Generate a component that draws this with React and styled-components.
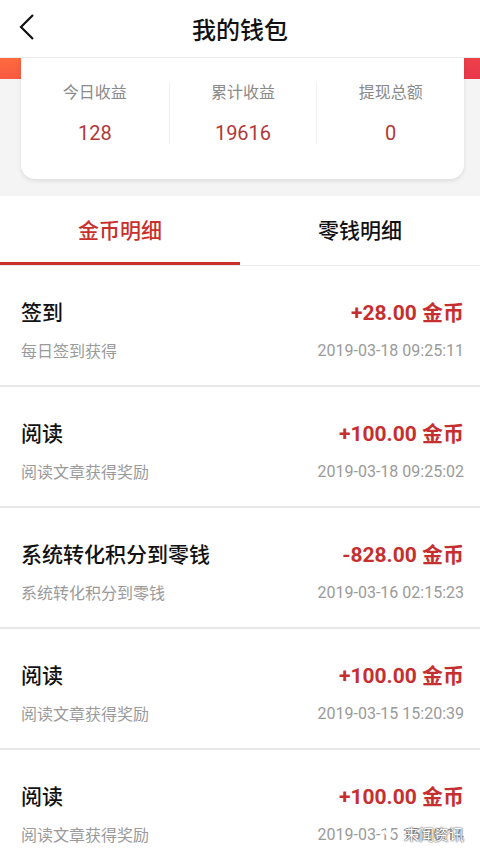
import React from 'react';
import styled, { createGlobalStyle } from 'styled-components';

const GlobalStyle = createGlobalStyle`
  html, body {
    margin: 0;
    padding: 0;
    background: #ffffff;
    font-family: Roboto, "Noto Sans CJK SC", sans-serif;
  }
`;

const Page = styled.div`
  width: 480px;
  height: 854px;
  overflow: hidden;
  position: relative;
  background: #ffffff;
`;

const Header = styled.div`
  height: 58px;
  display: flex;
  align-items: center;
  justify-content: center;
  position: relative;
  background: #fff;
  border-bottom: 1px solid #ececec;
  box-sizing: border-box;
`;

const BackButton = styled.div`
  position: absolute;
  left: 16px;
  top: 13px;
  width: 24px;
  height: 28px;
`;

const Title = styled.h1`
  margin: 0;
  font-size: 24px;
  font-weight: 500;
  color: #111;
`;

const Summary = styled.div`
  padding: 0 16px 17px 21px;
  background:
    linear-gradient(172deg, #ff6b3d 0%, #f04a45 50%, #e8364d 100%) top / 100% 21px no-repeat,
    #f4f4f4;
`;

const Card = styled.div`
  height: 121px;
  background: #fff;
  border-radius: 0 0 14px 14px;
  box-shadow: 0 2px 4px rgba(0, 0, 0, 0.1);
  display: grid;
  grid-template-columns: repeat(3, 1fr);
  padding-top: 24px;
  box-sizing: border-box;
`;

const Stat = styled.div`
  display: flex;
  flex-direction: column;
  align-items: center;
  height: 62px;
  border-left: ${(p) => (p.$first ? 'none' : '1px solid #f0f0f0')};
`;

const StatLabel = styled.span`
  font-size: 16px;
  color: #8a8a8a;
  line-height: 22px;
`;

const StatValue = styled.span`
  margin-top: 17px;
  font-size: 20px;
  color: #b23838;
  line-height: 24px;
`;

const Tabs = styled.div`
  display: flex;
  height: 70px;
  border-bottom: 1px solid #ededed;
  box-sizing: border-box;
`;

const Tab = styled.div`
  flex: 1;
  display: flex;
  align-items: center;
  justify-content: center;
  font-size: 21px;
  font-weight: 500;
  color: ${(p) => (p.$active ? '#c8302c' : '#111')};
  border-bottom: 3px solid ${(p) => (p.$active ? '#c8302c' : 'transparent')};
`;

const Row = styled.div`
  height: 121px;
  box-sizing: border-box;
  padding: 31px 16px 0 21px;
  border-bottom: 2px solid #e8e8e8;
  display: grid;
  grid-template-columns: 1fr auto;
  grid-template-rows: 28px 28px;
  row-gap: 11px;
  align-items: center;
`;

const RowTitle = styled.span`
  font-size: 21px;
  font-weight: 500;
  color: #111;
`;

const RowAmount = styled.span`
  font-size: 21px;
  font-weight: 700;
  color: #c62f2f;
  text-align: right;
`;

const RowSub = styled.span`
  font-size: 16px;
  color: #9a9a9a;
`;

const RowDate = styled.span`
  font-size: 16px;
  color: #9a9a9a;
  text-align: right;
`;

const Watermark = styled.div`
  position: absolute;
  right: 16px;
  bottom: 10px;
  display: flex;
  align-items: center;
  gap: 3px;
  font-size: 15px;
  color: #fff;
  text-shadow: 0 0 2px #444, 0 0 1px #444;
`;

const stats = [
  { label: '今日收益', value: '128' },
  { label: '累计收益', value: '19616' },
  { label: '提现总额', value: '0' },
];

const records = [
  { title: '签到', sub: '每日签到获得', amount: '+28.00 金币', date: '2019-03-18 09:25:11' },
  { title: '阅读', sub: '阅读文章获得奖励', amount: '+100.00 金币', date: '2019-03-18 09:25:02' },
  { title: '系统转化积分到零钱', sub: '系统转化积分到零钱', amount: '-828.00 金币', date: '2019-03-16 02:15:23' },
  { title: '阅读', sub: '阅读文章获得奖励', amount: '+100.00 金币', date: '2019-03-15 15:20:39' },
  { title: '阅读', sub: '阅读文章获得奖励', amount: '+100.00 金币', date: '2019-03-15 15:20:14' },
];

const App = () => (
  <Page>
    <GlobalStyle />
    <Header>
      <BackButton>
        <svg width="24" height="28" viewBox="0 0 24 28">
          <path d="M17 2 L5 14 L17 26" fill="none" stroke="#111" strokeWidth="2.2" />
        </svg>
      </BackButton>
      <Title>我的钱包</Title>
    </Header>
    <Summary>
      <Card>
        {stats.map((s, i) => (
          <Stat key={s.label} $first={i === 0}>
            <StatLabel>{s.label}</StatLabel>
            <StatValue>{s.value}</StatValue>
          </Stat>
        ))}
      </Card>
    </Summary>
    <Tabs>
      <Tab $active>金币明细</Tab>
      <Tab>零钱明细</Tab>
    </Tabs>
    {records.map((r, i) => (
      // eslint-disable-next-line react/no-array-index-key
      <Row key={i}>
        <RowTitle>{r.title}</RowTitle>
        <RowAmount>{r.amount}</RowAmount>
        <RowSub>{r.sub}</RowSub>
        <RowDate>{r.date}</RowDate>
      </Row>
    ))}
    <Watermark>
      <svg width="18" height="14" viewBox="0 0 18 14">
        <path d="M1 3 Q5 12 9 6 Q13 0 17 9" fill="none" stroke="#fff" strokeWidth="2" />
      </svg>
      来闻资讯
    </Watermark>
  </Page>
);

export default App;
